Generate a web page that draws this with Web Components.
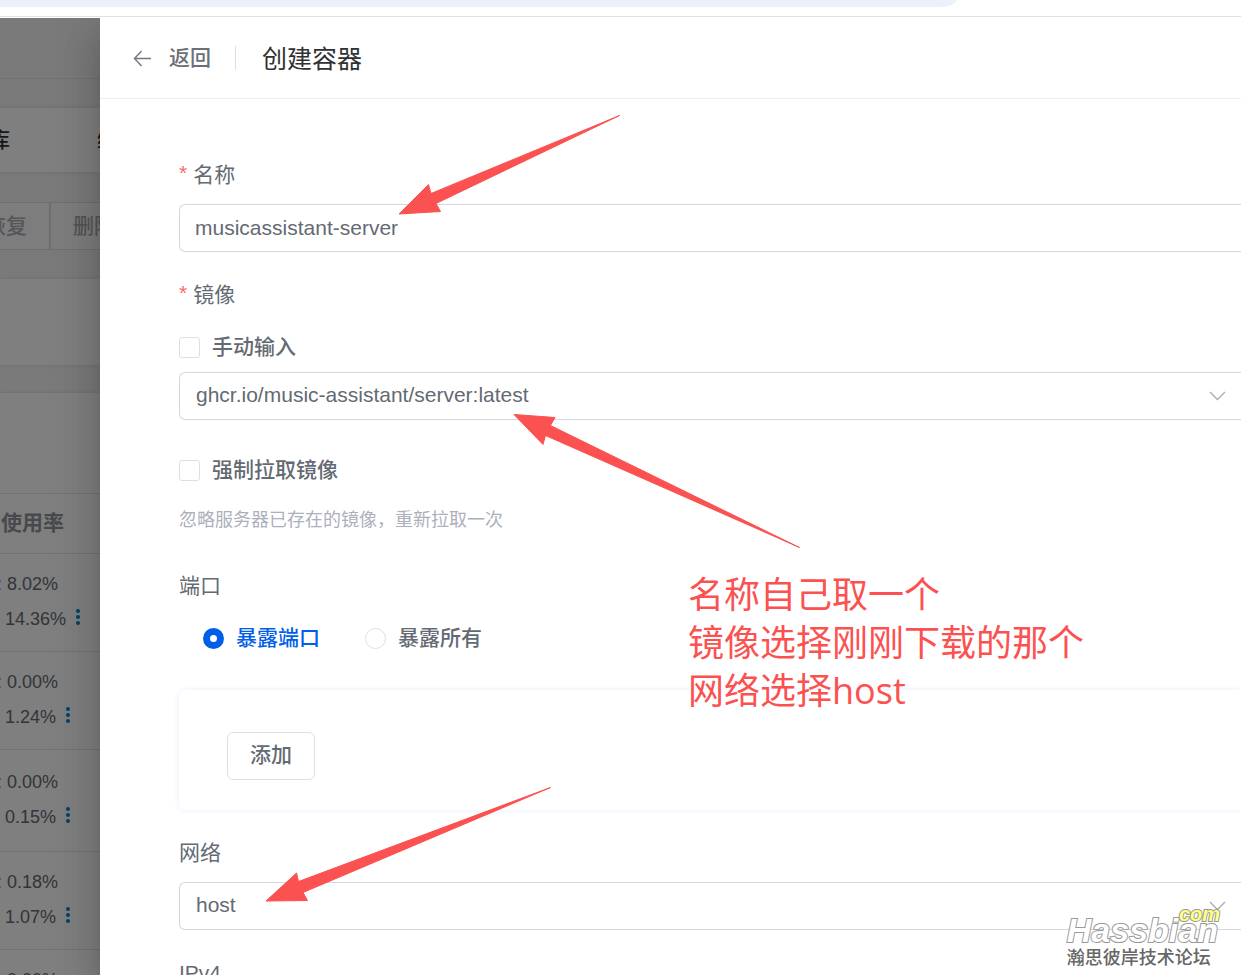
<!DOCTYPE html>
<html lang="zh-CN">
<head>
<meta charset="utf-8">
<meta name="viewport" content="width=device-width, initial-scale=1">
<title>创建容器</title>
<style>
  html, body {
    height: 100%;
    margin: 0;
  }
  body {
    overflow: hidden;
    background: #fff;
    color: #646a73;
    font-family: "Liberation Sans", "Noto Sans CJK SC", sans-serif;
    font-size: 21px;
    line-height: 32px;
  }
</style>
</head>
<body>
<app-window>
  <container-page slot="page"></container-page>
  <side-drawer slot="drawer" heading="创建容器" back="返回">
    <form-item label="名称" for="name" required>
      <text-field value="musicassistant-server" label="名称"></text-field>
    </form-item>
    <form-item label="镜像" required>
      <check-option text="手动输入"></check-option>
      <select-field value="ghcr.io/music-assistant/server:latest" label="镜像"></select-field>
    </form-item>
    <form-item>
      <check-option text="强制拉取镜像"></check-option>
      <field-hint>忽略服务器已存在的镜像，重新拉取一次</field-hint>
    </form-item>
    <form-item label="端口">
      <port-options></port-options>
    </form-item>
    <add-card>添加</add-card>
    <form-item label="网络">
      <select-field value="host" label="网络"></select-field>
    </form-item>
    <form-item label="IPv4">
      <text-field value="" label="IPv4"></text-field>
    </form-item>
  </side-drawer>
  <guide-notes slot="notes"></guide-notes>
  <site-mark slot="notes"></site-mark>
</app-window>

<script>
const define = (name, html, setup) => {
  const template = document.createElement("template");
  template.innerHTML = html;
  window.customElements.define(name, class extends HTMLElement {
    constructor() {
      super();
      this.attachShadow({ mode: "open" });
      this.shadowRoot.appendChild(template.content.cloneNode(true));
    }

    connectedCallback() {
      if (setup) {
        setup(this, this.shadowRoot);
      }
    }
  });
};

define("app-window", `
  <style>
    :host {
      display: flex;
      flex-direction: column;
      height: 100vh;
      position: relative;
      overflow: hidden;
    }
    .browser {
      flex: none;
      height: 16px;
      margin-bottom: 1px;
      border-bottom: 1px solid #dfe1e5;
    }
    .address {
      width: 77%;
      height: 7px;
      background: #ecf0fa;
      border-bottom-right-radius: 16px 7px;
    }
    .content {
      flex: 1;
      display: flex;
      min-height: 0;
      overflow: hidden;
    }
    .page {
      flex: 0 0 100px;
      min-width: 0;
      overflow: hidden;
    }
    .drawer {
      flex: 1;
      min-width: 0;
    }
  </style>
  <div class="browser"><div class="address"></div></div>
  <div class="content">
    <div class="page"><slot name="page"></slot></div>
    <div class="drawer"><slot name="drawer"></slot></div>
  </div>
  <slot name="notes"></slot>
`);

define("container-page", `
  <style>
    :host {
      display: block;
      position: relative;
      height: 100%;
      overflow: hidden;
      background: #f4f4f5;
    }
    .top {
      height: 60px;
      border-bottom: 1px solid #e4e5e8;
      margin-bottom: 29px;
    }
    .card {
      background: #fff;
      box-shadow: 0 0 4px #d8dbe8;
    }
    .tabs {
      display: flex;
      gap: 87px;
      height: 64px;
      margin-bottom: 30px;
      align-items: center;
    }
    .tabs a {
      flex: none;
      color: #303133;
      font-weight: 500;
      text-decoration: none;
    }
    .tabs a:first-child {
      width: 10px;
      display: flex;
      justify-content: flex-end;
    }
    .buttons {
      display: flex;
      height: 48px;
      margin-bottom: 29px;
    }
    .buttons button {
      flex: none;
      box-sizing: border-box;
      width: 88px;
      padding: 0 22px;
      border: 1px solid #dcdfe6;
      background: #fafafa;
      color: #a8abb2;
      font: inherit;
      font-weight: 500;
      white-space: nowrap;
    }
    .buttons button:first-child {
      display: flex;
      align-items: center;
      justify-content: flex-end;
      width: 50px;
      border-left: 0;
    }
    .search {
      height: 86px;
      margin-bottom: 28px;
    }
    .list {
      padding-top: 100px;
    }
    table {
      width: 100%;
      border-collapse: collapse;
    }
    th, td {
      box-sizing: border-box;
      padding: 0 0 2px;
      border-top: 1px solid #e4e5ec;
      border-bottom: 1px solid #e4e5ec;
      text-align: left;
    }
    th {
      height: 60px;
      color: #909399;
    }
    th span {
      display: flex;
      justify-content: flex-end;
      width: 64px;
    }
    td {
      height: 98px;
      color: #646a73;
      font-size: 18px;
      line-height: 35px;
    }
    tr.tall td {
      height: 102px;
    }
    .cpu {
      display: flex;
      justify-content: flex-end;
      width: 58px;
      white-space: pre;
    }
    .memory {
      display: flex;
      align-items: center;
      gap: 9px;
      padding-left: 5px;
    }
    .memory svg {
      margin-bottom: 4px;
    }
    .mask {
      position: absolute;
      inset: 0;
      background: rgba(0, 0, 0, .5);
    }
  </style>
  <div class="top"></div>
  <nav class="card tabs"><a href="#repo">库</a><a href="#template">编排</a></nav>
  <div class="buttons"><button type="button">恢复</button><button type="button">删除</button></div>
  <div class="card search"></div>
  <div class="card list">
    <table>
      <thead><tr><th><span>使用率</span></th></tr></thead>
      <tbody></tbody>
    </table>
  </div>
  <div class="mask"></div>
`, (host, root) => {
  const rows = [
    ["8.02%", "14.36%"],
    ["0.00%", "1.24%"],
    ["0.00%", "0.15%"],
    ["0.18%", "1.07%"],
    ["0.00%", "0.52%"]
  ];
  root.querySelector("tbody").innerHTML = rows.map(([cpu, memory], i) => `
    <tr class="${i == 2 ? "tall" : ""}"><td>
      <div class="cpu">: ${cpu}</div>
      <div class="memory">${memory}<svg width="6" height="18" viewBox="0 0 6 18" fill="#0082d0">
        <circle cx="3" cy="3" r="2"/><circle cx="3" cy="9" r="2"/><circle cx="3" cy="15" r="2"/>
      </svg></div>
    </td></tr>`).join("");
});

define("side-drawer", `
  <style>
    :host {
      display: flex;
      flex-direction: column;
      height: 100%;
      position: relative;
      background: #fff;
      box-shadow: 0 12px 15px -8px rgba(0, 0, 0, .14), 0 24px 36px 3px rgba(0, 0, 0, .12), 0 9px 45px 8px rgba(0, 0, 0, .1);
    }
    header {
      flex: none;
      display: flex;
      align-items: center;
      height: 80px;
      padding-left: 33px;
      border-bottom: 1px solid #ebedf0;
    }
    button {
      display: flex;
      align-items: center;
      gap: 17px;
      padding: 0;
      border: 0;
      background: none;
      color: #6b7078;
      font: inherit;
      font-weight: 500;
    }
    .divider {
      width: 1px;
      height: 24px;
      margin: 0 26px 0 24px;
      background: #dcdfe6;
    }
    h1 {
      margin: 0;
      padding-top: 2px;
      color: #303133;
      font-size: 25px;
      font-weight: 400;
    }
    form {
      flex: 1;
      display: flex;
      flex-direction: column;
      gap: 27px;
      min-height: 0;
      overflow: hidden;
      padding: 60px 0 0 79px;
    }
  </style>
  <header>
    <button type="button">
      <svg width="19" height="18" viewBox="0 0 19 18" fill="none" stroke="#73777f" stroke-width="1.4"><path d="M18 9.500H1.500M8.500 2L1.500 9.500L8.500 17"/></svg>
      <span></span>
    </button>
    <div class="divider"></div>
    <h1></h1>
  </header>
  <form><slot></slot></form>
`, (host, root) => {
  root.querySelector("h1").textContent = host.getAttribute("heading");
  root.querySelector("button span").textContent = host.getAttribute("back");
});

define("form-item", `
  <style>
    :host {
      display: block;
      flex: none;
    }
    .label {
      display: flex;
      gap: 6px;
      margin-bottom: 13px;
    }
    .label[hidden] {
      display: none;
    }
    .star {
      color: #f56c6c;
      line-height: 28px;
    }
  </style>
  <div class="label"><span class="star">*</span><span class="text"></span></div>
  <slot></slot>
`, (host, root) => {
  root.querySelector(".label").hidden = !host.hasAttribute("label");
  root.querySelector(".text").textContent = host.getAttribute("label");
  if (!host.hasAttribute("required")) {
    root.querySelector(".star").remove();
  }
});

define("text-field", `
  <style>
    :host {
      display: block;
    }
    input {
      display: block;
      box-sizing: border-box;
      width: 100%;
      height: 48px;
      padding: 0 15px;
      border: 1px solid #d4d7e0;
      border-right: 0;
      border-radius: 6px 0 0 6px;
      outline: none;
      background: #fff;
      color: #646a73;
      font: inherit;
    }
  </style>
  <input type="text">
`, (host, root) => {
  const input = root.querySelector("input");
  input.value = host.getAttribute("value");
  input.setAttribute("aria-label", host.getAttribute("label"));
});

define("select-field", `
  <style>
    :host {
      display: grid;
      align-items: center;
    }
    select, svg {
      grid-area: 1 / 1;
    }
    select {
      box-sizing: border-box;
      width: 100%;
      height: 48px;
      padding: 0 48px 2px 16px;
      border: 1px solid #d4d7e0;
      border-right: 0;
      border-radius: 6px 0 0 6px;
      outline: none;
      appearance: none;
      background: #fff;
      color: #646a73;
      font: inherit;
    }
    svg {
      justify-self: end;
      margin-right: 15px;
      pointer-events: none;
    }
  </style>
  <select><option></option></select>
  <svg width="17" height="10" viewBox="0 0 17 10" fill="none" stroke="#a8abb2" stroke-width="1.3"><path d="M1 1L8.500 8.500L16 1"/></svg>
`, (host, root) => {
  root.querySelector("option").textContent = host.getAttribute("value");
  root.querySelector("select").setAttribute("aria-label", host.getAttribute("label"));
});

define("check-option", `
  <style>
    :host {
      display: block;
    }
    label {
      display: flex;
      align-items: center;
      gap: 12px;
      height: 46px;
      padding-bottom: 2px;
      font-weight: 500;
    }
    input {
      appearance: none;
      box-sizing: border-box;
      width: 21px;
      height: 21px;
      margin: 0;
      border: 1px solid #dcdfe6;
      border-radius: 3px;
      background: #fff;
    }
  </style>
  <label><input type="checkbox"><span></span></label>
`, (host, root) => {
  root.querySelector("span").textContent = host.getAttribute("text");
});

define("field-hint", `
  <style>
    :host {
      display: block;
      padding-top: 2px;
      color: #adb0bc;
      font-size: 18px;
      line-height: 46px;
    }
  </style>
  <slot></slot>
`);

define("port-options", `
  <style>
    :host {
      display: flex;
      gap: 45px;
      height: 46px;
      padding: 0 0 2px 24px;
      font-weight: 500;
    }
    label {
      display: flex;
      align-items: center;
      gap: 12px;
    }
    input {
      appearance: none;
      box-sizing: border-box;
      width: 21px;
      height: 21px;
      margin: 0;
      border: 1px solid #dcdfe6;
      border-radius: 50%;
      background: #fff;
    }
    input:checked {
      border: 7px solid #005eeb;
    }
    input:checked + span {
      color: #005eeb;
    }
  </style>
  <label><input type="radio" name="port" checked><span>暴露端口</span></label>
  <label><input type="radio" name="port"><span>暴露所有</span></label>
`);

define("add-card", `
  <style>
    :host {
      display: block;
      flex: none;
      padding: 42px 48px 30px;
      border-radius: 6px 0 0 6px;
      box-shadow: 0 0 6px #e6edfa;
    }
    button {
      display: block;
      height: 48px;
      padding: 0 22px 2px;
      border: 1px solid #dcdfe6;
      border-radius: 6px;
      background: #fff;
      color: #646a73;
      font: inherit;
      font-weight: 500;
    }
  </style>
  <button type="button"><slot></slot></button>
`);

// arrows and the note lie over the whole form
define("guide-notes", `
  <style>
    :host {
      position: absolute;
      inset: 0;
      pointer-events: none;
      color: #fb5151;
    }
    svg {
      position: absolute;
      top: 0;
      left: 0;
      overflow: visible;
    }
    p {
      position: absolute;
      top: 571px;
      left: 688px;
      margin: 0;
      font-family: "Open Sans", "Noto Sans CJK SC", sans-serif;
      font-size: 36px;
      line-height: 48px;
      white-space: nowrap;
    }
  </style>
  <svg width="1241" height="975" viewBox="0 0 1241 975" fill="#fb5151" stroke="#fb5151" stroke-linejoin="round">
    <path d="M399 214L428.500 184.500L431 193.500L619.500 115.500L436 203.500L440.500 211.500Z"/>
    <path d="M514 414.500L555 417.500L550.500 425.500L799.500 547.500L545.500 435.500L543 444.500Z"/>
    <path d="M266 901L296.500 873L298.500 881.500L550.500 787.500L303 892.500L307.500 900.500Z"/>
  </svg>
  <p>名称自己取一个<br>镜像选择刚刚下载的那个<br>网络选择host</p>
`);

define("site-mark", `
  <style>
    :host {
      position: absolute;
      right: 21px;
      bottom: 5px;
      display: flex;
      flex-direction: column;
      pointer-events: none;
      color: #666;
    }
    .logo {
      display: grid;
      font-weight: bold;
      font-style: italic;
      -webkit-text-stroke: 2px #999;
      paint-order: stroke fill;
    }
    .logo span {
      grid-column: 1;
    }
    .name {
      grid-row: 2;
      margin-right: 2px;
      color: #fff;
      font-size: 34px;
      line-height: 32px;
    }
    .com {
      grid-row: 1;
      z-index: 1;
      height: 8px;
      justify-self: end;
      color: #ffff80;
      font-size: 20px;
      line-height: 16px;
    }
    .forum {
      font-size: 18px;
      font-weight: 500;
      line-height: 24px;
      text-shadow: 0 0 2px #fff;
    }
  </style>
  <div class="logo"><span class="com">com</span><span class="name">Hassbian</span></div>
  <div class="forum">瀚思彼岸技术论坛</div>
`);
</script>
</body>
</html>
